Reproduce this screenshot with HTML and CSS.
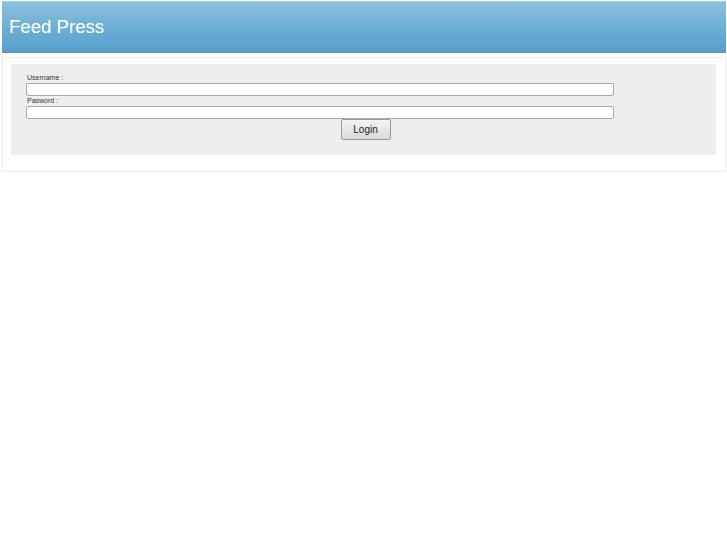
FILE: index.html
```html
<!DOCTYPE html>
<html lang="en">
<head>
  <meta charset="UTF-8" />
  <title>Feed Press</title>
  <link rel="stylesheet" href="styles.css">
</head>
<body>
  <!-- Header -->
  <div class="header">
    <h1 class="header-title">Feed Press</h1>
  </div>

  <!-- Login -->
  <div class="content">
    <form class="login-box" onsubmit="return false;">
      <label class="field-label" for="username">Username :</label>
      <input class="field-input" type="text" id="username" name="username">
      <label class="field-label" for="password">Pasword :</label>
      <input class="field-input" type="password" id="password" name="password">
      <div class="actions">
        <button class="btn-login" type="submit">Login</button>
      </div>
    </form>
  </div>
</body>
</html>
```

FILE: styles.css
```css
* {
  box-sizing: border-box;
}

body {
  margin: 1px 1px 0 2px;
  font-family: "Liberation Sans", Arial, sans-serif;
  background-color: #fff;
}

.header {
  height: 52px;
  background: linear-gradient(to bottom, #8bc0de 0%, #6eafd4 50%, #569fca 100%);
  border-top: 1px solid #a9d0e6;
  border-bottom: 1px solid #4f98c4;
  display: flex;
  align-items: center;
  padding: 0 7px;
}

.header-title {
  margin: 0;
  color: #fff;
  font-size: 18.6px;
  font-weight: normal;
}

.content {
  margin-top: 4px;
  border: 1px solid #e6efef;
  padding: 6px 9px 16px 8px;
}

.login-box {
  margin: 0;
  background: #eeeeee;
  padding: 9px 102px 15px 15px;
  display: flex;
  flex-direction: column;
}

.field-label {
  font-size: 7px;
  color: #333;
  line-height: 10px;
  padding-left: 1px;
}

.field-input {
  height: 13px;
  width: 100%;
  border: 1px solid #a8a8a8;
  border-radius: 2px;
  background: #fff;
  padding: 0 3px;
  font-size: 9px;
}

.actions {
  text-align: center;
  margin-right: -91px;
  margin-top: 0;
}

.btn-login {
  width: 50px;
  height: 21px;
  font-family: "Liberation Sans", Arial, sans-serif;
  font-size: 10px;
  color: #222;
  background: linear-gradient(to bottom, #f4f4f4, #d9d9d9);
  border: 1px solid #9a9a9a;
  border-radius: 2px;
  cursor: pointer;
}
```
